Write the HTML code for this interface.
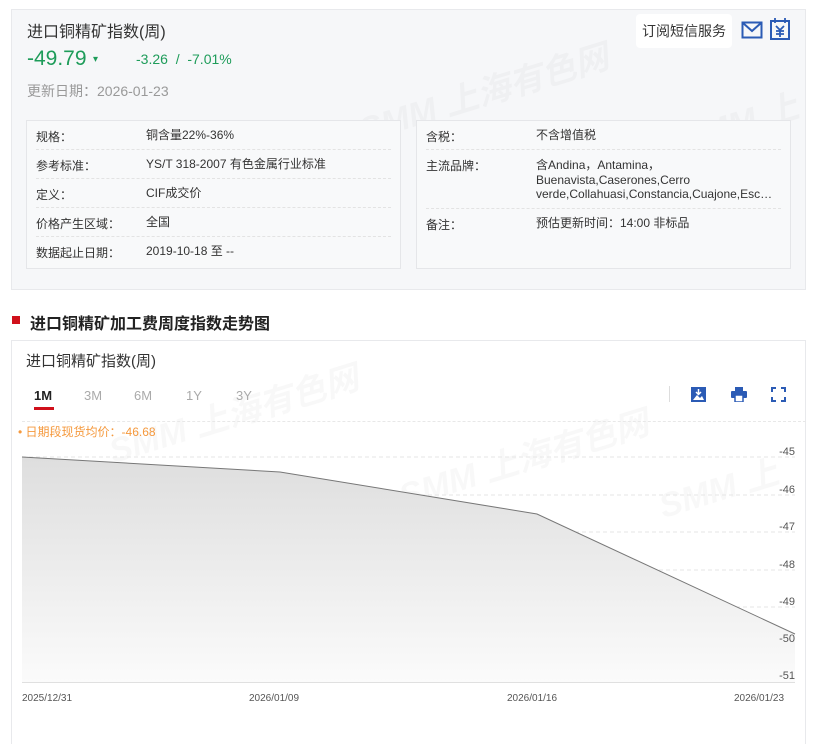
<!DOCTYPE html>
<html><head><meta charset="utf-8"><style>
*{margin:0;padding:0;box-sizing:border-box}
body{width:816px;height:744px;background:#fff;font-family:"Liberation Sans","Noto Sans CJK SC",sans-serif;color:#333;position:relative;overflow:hidden}
.abs{position:absolute}
.card{position:absolute;left:11px;top:9px;width:795px;height:281px;background:#f6f7f9;border:1px solid #e8e9ec}
.wm{position:absolute;color:rgba(0,0,0,0.028);font-weight:bold;font-style:italic;font-size:34px;transform:rotate(-17deg);white-space:nowrap;transform-origin:left top}
.tbl{position:absolute;top:120px;height:149px;border:1px solid #e5e6e9;background:#f8f9fa}
.row{position:absolute;left:9px;right:9px;border-bottom:1px dashed #e3e3e3;font-size:12px;color:#333}
.row .k{position:absolute;left:0}
.row .v{position:absolute;left:110px;line-height:14.5px}
.chart{position:absolute;left:11px;top:340px;width:795px;height:404px;border:1px solid #e8e9ec;border-bottom:none}
</style></head><body>
<div class="card">
 <div class="wm" style="left:340px;top:95px">SMM 上海有色网</div>
 <div class="wm" style="left:660px;top:105px">SMM 上</div>
 <div class="abs" style="left:15px;top:8px;font-size:16px;color:#333">进口铜精矿指数(周)</div>
 <div class="abs" style="left:15px;top:37px;font-size:21px;color:#1e9c5a">-49.79</div>
 <div class="abs" style="left:81px;top:44px;font-size:10px;color:#1e9c5a">▾</div>
 <div class="abs" style="left:124px;top:41px;font-size:14px;color:#1e9c5a">-3.26 &nbsp;/ &nbsp;-7.01%</div>
 <div class="abs" style="left:15px;top:71px;font-size:14px;color:#999">更新日期：2026-01-23</div>
 <div class="abs" style="left:624px;top:4px;width:96px;height:34px;background:#fff;border-radius:4px;font-size:14px;line-height:34px;text-align:center;color:#333">订阅短信服务</div>
 <svg class="abs" style="left:729px;top:10px" width="22" height="20" viewBox="0 0 22 20"><rect x="1.5" y="2.5" width="19" height="15" fill="none" stroke="#2b5bb5" stroke-width="2"/><path d="M2 3l9 8 9-8" fill="none" stroke="#2b5bb5" stroke-width="2"/></svg>
 <svg class="abs" style="left:757px;top:7px" width="22" height="24" viewBox="0 0 22 24"><rect x="2" y="4" width="18" height="18" fill="none" stroke="#2b5bb5" stroke-width="2"/><path d="M6 1v5M16 1v5M7 9l4 4 4-4M11 13v7M7 14h8M7 17h8" fill="none" stroke="#2b5bb5" stroke-width="1.8"/></svg>
</div>
<div class="tbl" style="left:26px;width:375px">
 <div class="row" style="top:0;height:29px"><span class="k" style="top:7px">规格：</span><span class="v" style="top:7px">铜含量22%-36%</span></div>
 <div class="row" style="top:29px;height:29px"><span class="k" style="top:7px">参考标准：</span><span class="v" style="top:7px">YS/T 318-2007 有色金属行业标准</span></div>
 <div class="row" style="top:58px;height:29px"><span class="k" style="top:7px">定义：</span><span class="v" style="top:7px">CIF成交价</span></div>
 <div class="row" style="top:87px;height:29px"><span class="k" style="top:7px">价格产生区域：</span><span class="v" style="top:7px">全国</span></div>
 <div class="row" style="top:116px;height:29px;border:none"><span class="k" style="top:7px">数据起止日期：</span><span class="v" style="top:7px">2019-10-18 至 --</span></div>
</div>
<div class="tbl" style="left:416px;width:375px">
 <div class="row" style="top:0;height:29px"><span class="k" style="top:7px">含税：</span><span class="v" style="top:7px">不含增值税</span></div>
 <div class="row" style="top:29px;height:59px"><span class="k" style="top:7px">主流品牌：</span><span class="v" style="top:8px;white-space:nowrap">含Andina，Antamina，<br>Buenavista,Caserones,Cerro<br>verde,Collahuasi,Constancia,Cuajone,Esc…</span></div>
 <div class="row" style="top:88px;height:29px;border:none"><span class="k" style="top:7px">备注：</span><span class="v" style="top:7px">预估更新时间：14:00 非标品</span></div>
</div>
<div class="abs" style="left:12px;top:316px;width:8px;height:8px;background:#d0101b"></div>
<div class="abs" style="left:30px;top:310px;font-size:16px;font-weight:bold;color:#222">进口铜精矿加工费周度指数走势图</div>
<div class="chart">
 <div class="wm" style="left:90px;top:85px">SMM 上海有色网</div>
 <div class="wm" style="left:380px;top:130px">SMM 上海有色网</div>
 <div class="wm" style="left:640px;top:140px">SMM 上</div>
 <div class="abs" style="left:14px;top:9px;font-size:15px;color:#333">进口铜精矿指数(周)</div>
 <div class="abs" style="left:22px;top:47px;font-size:13px;font-weight:bold;color:#222">1M</div>
 <div class="abs" style="left:22px;top:66px;width:20px;height:3px;background:#d0101b"></div>
 <div class="abs" style="left:72px;top:47px;font-size:13px;color:#aaa">3M</div>
 <div class="abs" style="left:122px;top:47px;font-size:13px;color:#aaa">6M</div>
 <div class="abs" style="left:174px;top:47px;font-size:13px;color:#aaa">1Y</div>
 <div class="abs" style="left:224px;top:47px;font-size:13px;color:#aaa">3Y</div>
 <div class="abs" style="left:657px;top:45px;width:1px;height:16px;background:#ddd"></div>
 <svg class="abs" style="left:679px;top:46px" width="15" height="15" viewBox="0 0 15 15"><rect x="0" y="0" width="15" height="15" fill="#2b5bb5"/><path d="M2 13l4-5 3 3 2-2 2 4z" fill="#fff"/><path d="M7.5 2v5M5 5l2.5 2.5L10 5" stroke="#fff" stroke-width="1.5" fill="none"/></svg>
 <svg class="abs" style="left:719px;top:46px" width="16" height="15" viewBox="0 0 16 15"><rect x="4" y="0" width="8" height="4" fill="#2b5bb5"/><rect x="0" y="4" width="16" height="7" rx="1" fill="#2b5bb5"/><rect x="4" y="8" width="8" height="7" fill="#fff" stroke="#2b5bb5" stroke-width="1.5"/></svg>
 <svg class="abs" style="left:759px;top:46px" width="15" height="15" viewBox="0 0 15 15"><path d="M1 5V1h4M10 1h4v4M14 10v4h-4M5 14H1v-4" fill="none" stroke="#2b5bb5" stroke-width="2"/></svg>
 <div class="abs" style="left:10px;top:80px;width:784px;border-top:1px dashed #e8e8e8"></div>
 <div class="abs" style="left:6px;top:82px;font-size:12px;color:#f5993d">• 日期段现货均价：-46.68</div>
</div>
<svg class="abs" style="left:0;top:0" width="816" height="744">
 <defs><linearGradient id="g" x1="0" y1="0" x2="0" y2="1"><stop offset="0" stop-color="#dedede"/><stop offset="1" stop-color="#fbfbfb"/></linearGradient></defs>
 <g stroke="#e6e6e6" stroke-dasharray="4,3"><line x1="22" x2="795" y1="457" y2="457"/><line x1="22" x2="795" y1="495" y2="495"/><line x1="22" x2="795" y1="532" y2="532"/><line x1="22" x2="795" y1="570" y2="570"/><line x1="22" x2="795" y1="607" y2="607"/><line x1="22" x2="795" y1="645" y2="645"/></g>
 <path d="M22 457L280 472L537 514L795 634L795 682L22 682Z" fill="url(#g)"/>
 <path d="M22 457L280 472L537 514L795 634" fill="none" stroke="#777" stroke-width="1"/>
 <line x1="22" x2="795" y1="682.5" y2="682.5" stroke="#e0e0e0"/>
 <g font-family="Liberation Sans,sans-serif" font-size="11" fill="#555" text-anchor="end"><text x="795" y="455">-45</text><text x="795" y="493">-46</text><text x="795" y="530">-47</text><text x="795" y="568">-48</text><text x="795" y="605">-49</text><text x="795" y="642">-50</text><text x="795" y="679">-51</text></g>
 <g font-family="Liberation Sans,sans-serif" font-size="10" fill="#555"><text x="22" y="701">2025/12/31</text><text x="249" y="701">2026/01/09</text><text x="507" y="701">2026/01/16</text><text x="734" y="701">2026/01/23</text></g>
</svg>
</body></html>
